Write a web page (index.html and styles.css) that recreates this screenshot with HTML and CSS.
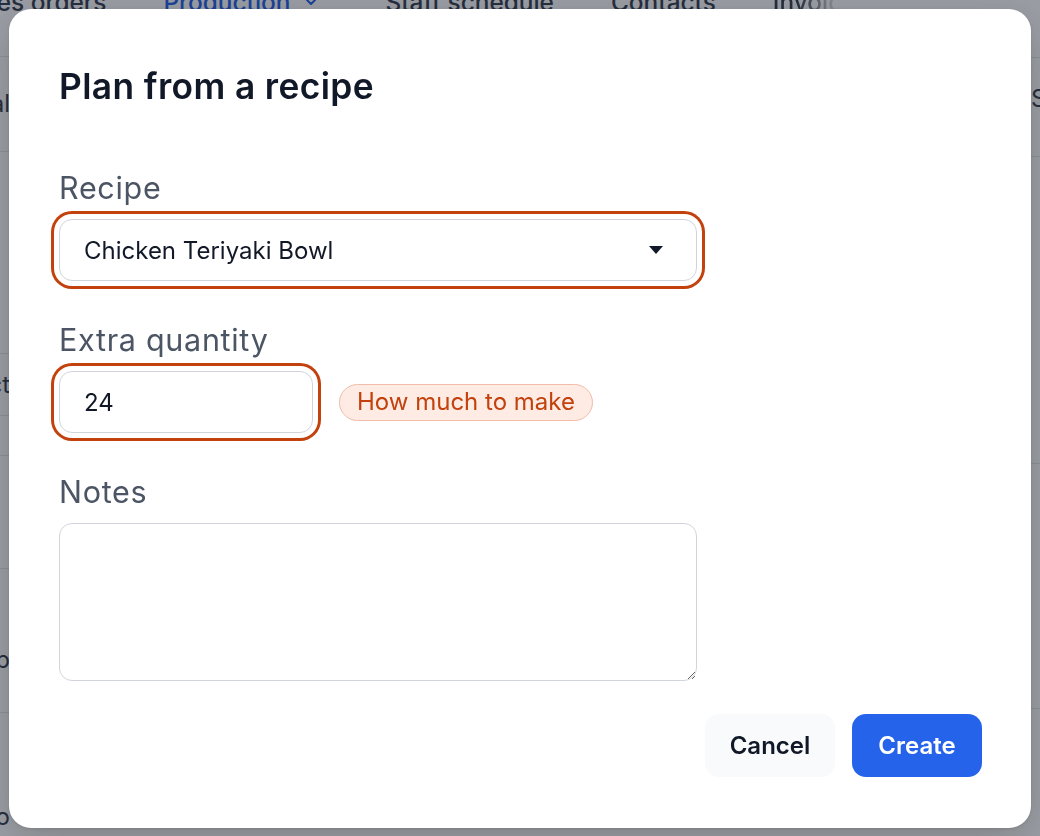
FILE: index.html
```html
<!DOCTYPE html>
<html lang="en">
<head>
<meta charset="utf-8">
<title>Plan from a recipe</title>
<link rel="stylesheet" href="styles.css">
</head>
<body>
<div class="page">
  <nav class="topnav">
    <span class="nav-item first">Sales orders</span>
    <span class="nav-item active">Production
      <svg class="chev" width="12" height="12" viewBox="0 0 12 12"><path d="M2 4l4 4 4-4" fill="none" stroke="currentColor" stroke-width="2" stroke-linecap="round" stroke-linejoin="round"/></svg>
    </span>
    <span class="nav-item">Staff schedule</span>
    <span class="nav-item">Contacts</span>
    <span class="nav-item fade">Invoices</span>
  </nav>
  <div class="bg-cols">
    <div class="bg-col left">
      <div class="bg-row h94"><span>Total</span></div>
      <div class="bg-row h202"><span></span></div>
      <div class="bg-row h62"><span>Product</span></div>
      <div class="bg-row h40"><span></span></div>
      <div class="bg-row h113"><span></span></div>
      <div class="bg-row h144 low"><span>Chip</span></div>
      <div class="bg-row h120 lower"><span>Demo</span></div>
    </div>
    <div class="bg-col right">
      <div class="bg-row h99 raised"><span>Status</span></div>
      <div class="bg-row h307"><span></span></div>
      <div class="bg-row h245"><span></span></div>
      <div class="bg-row h120"><span></span></div>
    </div>
  </div>
</div>
<div class="overlay"></div>

<div class="modal" role="dialog" aria-labelledby="dlg-title">
  <h2 id="dlg-title" class="modal-title">Plan from a recipe</h2>
  <div class="fields">
    <div class="field">
      <label class="field-label">Recipe</label>
      <div class="select-box ring">
        <span>Chicken Teriyaki Bowl</span>
        <svg class="caret" width="14" height="8" viewBox="0 0 14 8"><polygon points="0,0 14,0 7,8" fill="#111827"/></svg>
      </div>
    </div>
    <div class="field">
      <label class="field-label" for="qty">Extra quantity</label>
      <div class="qty-row">
        <input id="qty" class="text-input ring" type="text" value="24">
        <span class="hint-badge">How much to make</span>
      </div>
    </div>
    <div class="field">
      <label class="field-label" for="notes">Notes</label>
      <textarea id="notes" class="notes"></textarea>
    </div>
  </div>
  <div class="modal-footer">
    <button class="btn btn-cancel" type="button">Cancel</button>
    <button class="btn btn-create" type="button">Create</button>
  </div>
</div>
</body>
</html>
```

FILE: styles.css
```css
* { box-sizing: border-box; }

html, body {
  margin: 0;
  padding: 0;
  width: 1040px;
  height: 836px;
  overflow: hidden;
  background: #ffffff;
  font-family: Inter, "Noto Sans", "Liberation Sans", sans-serif;
}

/* ---------- background page ---------- */
.page {
  width: 1040px;
  height: 836px;
  overflow: hidden;
  color: #374151;
}

.topnav {
  display: flex;
  align-items: center;
  gap: 57px;
  margin-top: -13px;
  height: 30px;
  font-size: 24.4px;
  line-height: 24px;
  font-weight: 500;
  white-space: nowrap;
}

.nav-item { display: inline-flex; align-items: center; gap: 15px; }
.nav-item.first { margin-left: -39px; }
.nav-item.active { color: #2563eb; }
.nav-item.fade {
  -webkit-mask-image: linear-gradient(to right, #000 25%, transparent 70%);
  mask-image: linear-gradient(to right, #000 25%, transparent 70%);
}
.chev { margin-right: 11px; }

.bg-cols {
  display: flex;
  justify-content: space-between;
  margin-top: 39px;
}
.bg-col.left { width: 500px; margin-left: -490px; }
.bg-col.right { width: 1000px; margin-top: 1px; margin-right: -500px; }

.bg-row {
  display: flex;
  align-items: center;
  border-top: 1px solid #e5e7eb;
  font-size: 24px;
  line-height: 28px;
  color: #374151;
}
.bg-col.left .bg-row { justify-content: flex-end; }
.bg-col.right .bg-row { justify-content: flex-start; padding-left: 491px; }
.bg-row.raised { align-items: flex-start; padding-top: 27px; }
.bg-row.low { align-items: flex-end; padding-bottom: 38px; }
.bg-row.lower { align-items: flex-end; padding-bottom: 11px; }

.h40 { height: 40px; }
.h62 { height: 62px; }
.h94 { height: 95px; }
.h99 { height: 99px; }
.h113 { height: 113px; }
.h120 { height: 130px; }
.h144 { height: 144px; }
.h202 { height: 202px; }
.h245 { height: 245px; }
.h307 { height: 307px; }

.overlay {
  position: fixed;
  inset: 0;
  background: rgba(17, 24, 39, 0.42);
}

/* ---------- modal ---------- */
.modal {
  position: fixed;
  top: 9px;
  left: 9px;
  width: 1022px;
  padding: 58px 49px 51px 50px;
  background: #ffffff;
  border-radius: 22px;
  box-shadow: 0 10px 40px rgba(0, 0, 0, 0.18), 0 1px 3px rgba(0, 0, 0, 0.1);
  display: flex;
  flex-direction: column;
}

.modal-title {
  margin: 0 0 63px;
  font-size: 35.3px;
  line-height: 40px;
  font-weight: 600;
  color: #111827;
  letter-spacing: 0.4px;
}

.fields {
  display: flex;
  flex-direction: column;
  gap: 41px;
}

.field { display: flex; flex-direction: column; align-items: flex-start; }

.field-label {
  display: block;
  margin-bottom: 14px;
  font-size: 30.5px;
  line-height: 35px;
  font-weight: 400;
  color: #4b5563;
  letter-spacing: 0.7px;
}

.ring {
  box-shadow: 0 0 0 5px #ffffff, 0 0 0 8px #c2410c;
}

.select-box {
  width: 638px;
  height: 62px;
  display: flex;
  align-items: center;
  justify-content: space-between;
  padding: 0 33px 0 24px;
  border: 1.5px solid #d1d5db;
  border-radius: 13px;
  background: #ffffff;
  font-size: 24px;
  color: #111827;
}

.qty-row {
  display: flex;
  align-items: center;
  gap: 26px;
}

.text-input {
  width: 254px;
  height: 62px;
  padding: 0 24px;
  border: 1.5px solid #d1d5db;
  border-radius: 13px;
  background: #ffffff;
  font-family: inherit;
  font-size: 24px;
  color: #111827;
  outline: none;
}

.hint-badge {
  display: inline-flex;
  align-items: center;
  height: 37px;
  padding: 0 17px;
  border: 1.5px solid #f3bca9;
  border-radius: 999px;
  background: #fdebe4;
  color: #c2410c;
  font-size: 24px;
  line-height: 1;
}

.notes {
  display: block;
  width: 638px;
  height: 158px;
  padding: 14px 20px;
  border: 1.5px solid #d1d5db;
  border-radius: 13px;
  background: #ffffff;
  font-family: inherit;
  font-size: 24px;
  color: #111827;
  resize: both;
  outline: none;
}

.modal-footer {
  display: flex;
  justify-content: flex-end;
  gap: 17px;
  margin-top: 33px;
}

.btn {
  width: 130px;
  height: 63px;
  border: none;
  border-radius: 14px;
  font-family: inherit;
  font-size: 24px;
  font-weight: 600;
  cursor: pointer;
}

.btn-cancel { background: #f8fafc; color: #111827; }
.btn-create { background: #2563eb; color: #ffffff; }
```
